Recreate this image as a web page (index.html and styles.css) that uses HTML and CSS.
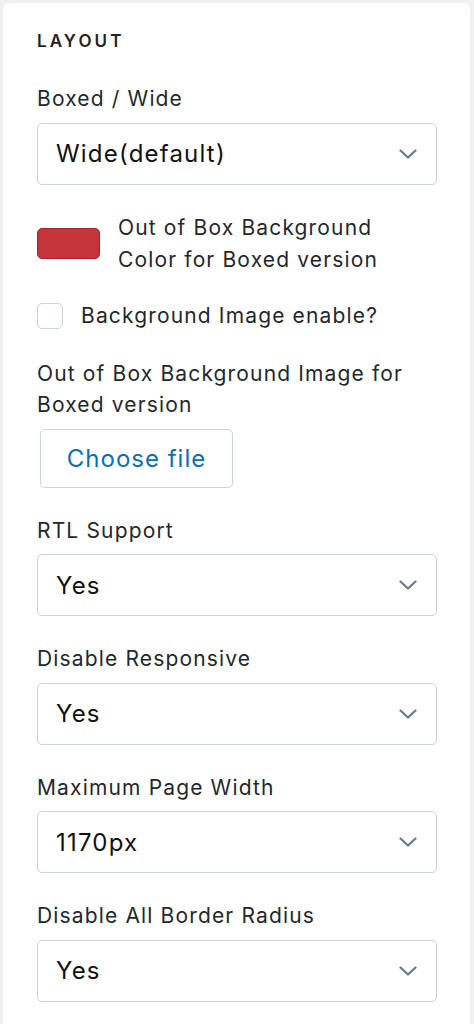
FILE: index.html
```html
<!DOCTYPE html>
<html lang="en">
<head>
<meta charset="utf-8">
<title>Layout</title>
<link rel="stylesheet" href="styles.css">
</head>
<body>
<div class="panel">
  <h2 class="section-title">LAYOUT</h2>

  <div class="field field-select">
    <label class="label">Boxed / Wide</label>
    <div class="select"><span class="select-value">Wide(default)</span><svg class="chev" viewBox="0 0 18 10" width="18" height="10"><path d="M1.5 1.5 L9 8.5 L16.5 1.5" fill="none" stroke="#6b7c8d" stroke-width="2.3" stroke-linecap="round" stroke-linejoin="round"/></svg></div>
  </div>

  <div class="field color-row">
    <span class="swatch"></span>
    <span class="color-label">Out of Box Background<br>Color for Boxed version</span>
  </div>

  <div class="field check-row">
    <span class="checkbox"></span>
    <span class="check-label">Background Image enable?</span>
  </div>

  <div class="field file-field">
    <label class="label">Out of Box Background Image for<br>Boxed version</label>
    <button class="file-btn">Choose file</button>
  </div>

  <div class="field field-select">
    <label class="label">RTL Support</label>
    <div class="select"><span class="select-value">Yes</span><svg class="chev" viewBox="0 0 18 10" width="18" height="10"><path d="M1.5 1.5 L9 8.5 L16.5 1.5" fill="none" stroke="#6b7c8d" stroke-width="2.3" stroke-linecap="round" stroke-linejoin="round"/></svg></div>
  </div>

  <div class="field field-select">
    <label class="label">Disable Responsive</label>
    <div class="select"><span class="select-value">Yes</span><svg class="chev" viewBox="0 0 18 10" width="18" height="10"><path d="M1.5 1.5 L9 8.5 L16.5 1.5" fill="none" stroke="#6b7c8d" stroke-width="2.3" stroke-linecap="round" stroke-linejoin="round"/></svg></div>
  </div>

  <div class="field field-select">
    <label class="label">Maximum Page Width</label>
    <div class="select"><span class="select-value">1170px</span><svg class="chev" viewBox="0 0 18 10" width="18" height="10"><path d="M1.5 1.5 L9 8.5 L16.5 1.5" fill="none" stroke="#6b7c8d" stroke-width="2.3" stroke-linecap="round" stroke-linejoin="round"/></svg></div>
  </div>

  <div class="field field-select">
    <label class="label">Disable All Border Radius</label>
    <div class="select"><span class="select-value">Yes</span><svg class="chev" viewBox="0 0 18 10" width="18" height="10"><path d="M1.5 1.5 L9 8.5 L16.5 1.5" fill="none" stroke="#6b7c8d" stroke-width="2.3" stroke-linecap="round" stroke-linejoin="round"/></svg></div>
  </div>
</div>
</body>
</html>
```

FILE: styles.css
```css
html, body {
  margin: 0;
  padding: 0;
}
body {
  background: #f0f0f1;
  font-family: Inter, "Liberation Sans", sans-serif;
  color: #1f2326;
  height: 1024px;
  overflow: hidden;
}
.panel {
  margin: 3px 4px 0 3px;
  background: #ffffff;
  border-radius: 6px;
  padding: 26px 33px 40px 34px;
  min-height: 1100px;
}
.section-title {
  margin: 0 0 30px 0;
  font-size: 17px;
  line-height: 24px;
  font-weight: 600;
  letter-spacing: 3.1px;
  color: #1d2327;
}
.field {
  margin-bottom: 26px;
}
.field-select {
  margin-bottom: 27px;
}
.color-row.field {
  margin-bottom: 24px;
}
.file-field.field {
  margin-bottom: 27px;
}
.label {
  display: block;
  font-size: 21px;
  line-height: 31.5px;
  letter-spacing: 1.15px;
  margin-bottom: 8px;
  color: #23282d;
}
.select {
  height: 62px;
  box-sizing: border-box;
  border: 1px solid #cad3dd;
  border-radius: 5px;
  display: flex;
  align-items: center;
  justify-content: space-between;
  padding: 0 19px 0 18px;
  background: #fff;
}
.select-value {
  font-size: 24px;
  letter-spacing: 1.2px;
  color: #111;
}
.chev {
  display: block;
}
.color-row {
  display: flex;
  align-items: center;
  gap: 18px;
}
.swatch {
  width: 63px;
  height: 31px;
  box-sizing: border-box;
  background: #c5333b;
  border: 1px solid #a5252c;
  border-radius: 5px;
  flex: none;
}
.color-label {
  font-size: 21px;
  line-height: 32px;
  letter-spacing: 1.15px;
  color: #23282d;
}
.check-row {
  display: flex;
  align-items: center;
  gap: 18px;
}
.checkbox {
  width: 26px;
  height: 26px;
  box-sizing: border-box;
  border: 1px solid #cad3dd;
  border-radius: 5px;
  flex: none;
}
.check-label {
  font-size: 21px;
  line-height: 32px;
  letter-spacing: 1.15px;
  color: #23282d;
}
.file-btn {
  display: block;
  margin-left: 3px;
  width: 193px;
  height: 59px;
  box-sizing: border-box;
  border: 1px solid #cad3dd;
  border-radius: 5px;
  background: #fff;
  color: #0b6fb8;
  font-family: Inter, "Liberation Sans", sans-serif;
  font-size: 24px;
  letter-spacing: 1px;
  padding: 0;
}
```
